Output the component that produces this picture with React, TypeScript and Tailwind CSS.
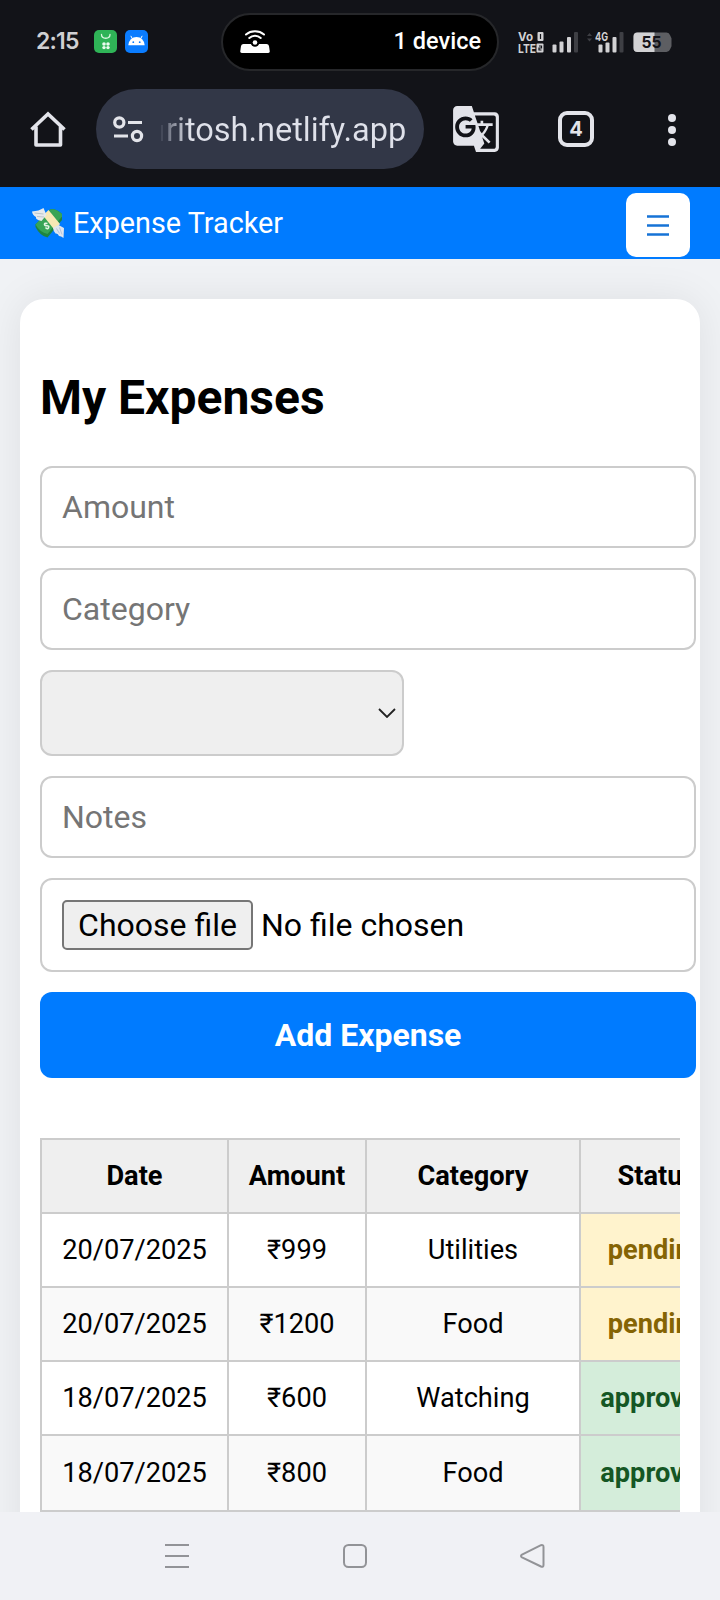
import type { ReactNode } from "react";
import { MdGTranslate } from "react-icons/md";

type Status = "pending" | "approved";

interface Expense {
  date: string;
  amount: string;
  category: string;
  status: Status;
}

const expenses: Expense[] = [
  { date: "20/07/2025", amount: "₹999", category: "Utilities", status: "pending" },
  { date: "20/07/2025", amount: "₹1200", category: "Food", status: "pending" },
  { date: "18/07/2025", amount: "₹600", category: "Watching", status: "approved" },
  { date: "18/07/2025", amount: "₹800", category: "Food", status: "approved" },
];

const statusStyles: Record<Status, string> = {
  pending: "bg-[#fff3cd] text-[#856404]",
  approved: "bg-[#d4edda] text-[#155724]",
};

function StatusBar() {
  return (
    <div className="flex h-[83px] items-center pl-9">
      <span className="w-[58px] whitespace-nowrap font-['Inter'] text-[23px] font-semibold leading-none tracking-[-0.8px] text-[#d0d0d2]">
        2:15
      </span>
      <svg className="h-[23px] w-[54px]" viewBox="0 0 54 23">
        <rect width="23" height="23" rx="5" fill="#2fb457" />
        <path d="M7.5 4.5c0 5 8.500 5 8.500 0" fill="none" stroke="#d9f7e0" strokeWidth="1.300" strokeLinecap="round" />
        <g fill="#e9fbee">
          <circle cx="10" cy="14" r="1.800" />
          <circle cx="14" cy="14" r="1.800" />
          <circle cx="10" cy="17.600" r="1.700" />
          <circle cx="14" cy="17.600" r="1.700" />
        </g>
        <rect x="31" width="23" height="23" rx="5" fill="#0a7cff" />
        <path d="M34.300 15.300a8.200 8.200 0 0 1 16.400 0z" fill="#fff" />
        <path d="m38.500 9-1.500-2.800M46.500 9 48 6.200" stroke="#fff" strokeWidth="1" strokeLinecap="round" />
        <circle cx="39.300" cy="12.200" r=".9" fill="#0a7cff" />
        <circle cx="45.700" cy="12.200" r=".9" fill="#0a7cff" />
      </svg>
      <div className="ml-[73px] flex h-[58px] w-[278px] shrink-0 items-center justify-between rounded-full border-2 border-[#26272a] bg-black pl-[17px] pr-[16px]">
        <svg className="h-[24px] w-[30px]" viewBox="0 0 30 24">
          <path d="M3.500 14h23q2 0 2.500 2l.700 4.800q.200 2.200-1.900 2.200H2.200Q.100 23 .300 20.800L1 16q.500-2 2.500-2z" fill="#fff" />
          <circle cx="15" cy="12.500" r="4.300" fill="#000" />
          <circle cx="15" cy="12.500" r="2.300" fill="#fff" />
          <path d="M9.300 8c3.200-3.100 8.200-3.100 11.400 0M6 4.500c5-4.300 13-4.300 18 0" fill="none" stroke="#fff" strokeWidth="2" strokeLinecap="round" />
        </svg>
        <span className="whitespace-nowrap text-[23.500px] font-medium leading-none text-white">1 device</span>
      </div>
      <svg className="ml-[18px] h-[24px] w-[158px] font-['Inter'] font-bold" viewBox="0 0 158 24">
        <g fill="#d2d2d4">
          <text x="1" y="11" fontSize="11.500" textLength="15" lengthAdjust="spacingAndGlyphs">Vo</text>
          <text x="1" y="22.500" fontSize="12" textLength="18" lengthAdjust="spacingAndGlyphs">LTE</text>
          <rect x="20.500" y="2" width="6" height="9" rx="1" />
          <rect x="19.500" y="13.500" width="7" height="9" rx="1" />
          <rect x="35.500" y="14.500" width="4" height="8" rx="1" />
          <rect x="42.500" y="11.500" width="4" height="11" rx="1" />
          <rect x="50" y="7" width="4" height="15.500" rx="1" />
          <rect x="57" y="2" width="4" height="20.500" rx="1" fill="#3e3f44" />
          <path d="m70 6 2.500-3 2.500 3zM70 8.500l2.500 3 2.500-3z" fill="#3e3f44" />
          <text x="78" y="11" fontSize="11.500" textLength="13" lengthAdjust="spacingAndGlyphs">4G</text>
          <rect x="81.500" y="14.500" width="4" height="8" rx="1" />
          <rect x="88.500" y="12.500" width="4" height="10" rx="1" />
          <rect x="95.500" y="7" width="4" height="15.500" rx="1" />
          <rect x="102.500" y="2" width="4" height="20.500" rx="1" fill="#3e3f44" />
        </g>
        <path d="M23.500 4v5M22 16h2.500v2H22v2h2.500" fill="none" stroke="#121318" strokeWidth="1.200" />
        <path d="M120.500 2.500h29a4 4 0 0 1 3.600 2.800l1.400 3v8l-1.400 3a4 4 0 0 1-3.600 2.800h-29a4 4 0 0 1-4-4v-11.600a4 4 0 0 1 4-4z" fill="#5d5e62" />
        <path d="M137.500 2.500h-17a4 4 0 0 0-4 4v11.600a4 4 0 0 0 4 4h17z" fill="#d2d2d4" />
        <text x="124.500" y="18" fontSize="16" textLength="20" lengthAdjust="spacingAndGlyphs" fill="#121318">55</text>
      </svg>
    </div>
  );
}

function BrowserBar() {
  return (
    <div className="flex h-[104px] items-start pl-[30px] pt-[6px]">
      <svg className="mt-[22px] h-[37px] w-[37px]" viewBox="0 0 37 37" fill="none" stroke="#e3e4ea" strokeWidth="3.600" strokeLinejoin="round">
        <path d="M1.500 18.500 18 3l16.500 15.500" strokeLinejoin="miter" />
        <path d="M6 15.500V34h24.500V15.500" />
      </svg>
      <div className="ml-[29px] flex h-20 w-[328px] items-center rounded-full bg-[#323747] pl-4">
        <svg className="h-8 w-8" viewBox="0 0 32 32" fill="none" stroke="#e3e4ea" strokeWidth="3.200">
          <circle cx="7.300" cy="9.500" r="4.600" />
          <circle cx="25" cy="23" r="4.600" />
          <path d="M16 9.500h14M2 23h14" />
        </svg>
        <i className="ml-[17px] mt-2 h-4 w-0.5 bg-[#444959]" />
        <div className="mt-[6px] whitespace-nowrap bg-linear-to-r from-[#5a5f6e] from-[0%] via-[#dfe1ea] via-[11%] to-[#dfe1ea] bg-clip-text pb-1 pl-[3px] text-[32.600px] leading-[42px] tracking-[-0.040px] text-transparent">
          ritosh.netlify.app
        </div>
      </div>
      <MdGTranslate className="ml-[27px] mt-[15px] h-[50px] w-[50px] text-[#e3e4ea]" />
      <div className="ml-[57px] mt-[22px] flex h-9 w-9 items-center justify-center rounded-[9px] border-4 border-[#e3e4ea] font-['Inter'] text-[20px] font-bold leading-none text-[#e3e4ea]">
        4
      </div>
      <div className="ml-[74px] mt-[25px] flex flex-col gap-1">
        <i className="size-2 rounded-full bg-[#e3e4ea]" />
        <i className="size-2 rounded-full bg-[#e3e4ea]" />
        <i className="size-2 rounded-full bg-[#e3e4ea]" />
      </div>
    </div>
  );
}

function MoneyWings() {
  return (
    <svg className="h-[32px] w-[33px]" viewBox="0 0 33 32">
      <path d="M3.500 17.500 18 2.500q6-1.500 12 4.500v6L15.500 30.500Q8 29 3.500 20z" fill="#1e8440" />
      <path d="M3.500 17.500 18 2.500q6-1.500 12 4.500v2.500L15.500 27Q8 25.500 3.500 17.500z" fill="#37a455" />
      <path d="m11 8.500 5.500-5.500L28 17l-5 6.500z" fill="#f7e8b4" />
      <path d="M0 4.500q7-.500 11.500-3.500l3 7-5 6Q3 12.500 4 10 .500 8 0 4.500z" fill="#e5e9ec" />
      <path d="m2.500 6 9 1M5 9.500l7 .500" stroke="#b9c5cc" strokeWidth="1" />
      <path d="m21 21 5.500-3 5.500 3-.500 10q-2.500-2-4.500-2-1-3-3.500-2.500-2-2-2.500-5.500z" fill="#dfe5ee" />
      <path d="m27.500 20.500 2.500 7m-5.500-6 3 5" stroke="#b3c3dc" strokeWidth="1" />
      <path d="M15.500 16.500q-3-.700-3 .8t2.500 1.500 1.500 2-3-.300" fill="none" stroke="#e4f5e4" strokeWidth="1.600" />
    </svg>
  );
}

function Field({ label }: { label: string }) {
  return (
    <input
      placeholder={label}
      className="h-[82px] w-full rounded-xl border-2 border-[#ccc] bg-white px-5 text-[32px] text-black placeholder:text-[#757575]"
    />
  );
}

function Cell({ children, className }: { children: ReactNode; className?: string }) {
  return (
    <div className={`flex items-center justify-center border-r-2 border-b-2 border-[#ccc] ${className ?? ""}`}>
      {children}
    </div>
  );
}

const rowGrid = "grid w-[700px] grid-cols-[187px_138px_214px_154px] border-l-2 border-[#ccc]";

function ExpenseTable() {
  return (
    <div className="mt-[60px] w-[640px] overflow-hidden text-[27.200px] text-black">
      <div className={`${rowGrid} h-[76px] border-t-2 bg-[#efefef] font-bold`}>
        <Cell>Date</Cell>
        <Cell>Amount</Cell>
        <Cell>Category</Cell>
        <Cell>Status</Cell>
      </div>
      {expenses.map((expense, i) => (
        <div key={i} className={`${rowGrid} h-[74px] last:h-[76px] ${i % 2 ? "bg-[#f9f9f9]" : "bg-white"}`}>
          <Cell>{expense.date}</Cell>
          <Cell>{expense.amount}</Cell>
          <Cell>{expense.category}</Cell>
          <Cell className={`font-bold ${statusStyles[expense.status]}`}>{expense.status}</Cell>
        </div>
      ))}
    </div>
  );
}

export default function App() {
  return (
    <div className="flex h-[1600px] w-[720px] flex-col overflow-hidden bg-[#f0f2f5] font-['Roboto','Liberation_Sans',sans-serif]">
      <div className="h-[187px] shrink-0 bg-[#121318]">
        <StatusBar />
        <BrowserBar />
      </div>

      <header className="flex h-[72px] shrink-0 items-start justify-between bg-[#007bff] pl-8 pr-[30px]">
        <div className="mt-[18px] flex items-center gap-[8px]">
          <MoneyWings />
          <span className="mt-px text-[28.800px] leading-[34px] text-white">Expense Tracker</span>
        </div>
        <button className="mt-[6px] flex size-16 items-center justify-center rounded-[10px] bg-white">
          <svg className="h-[22px] w-[22px]" viewBox="0 0 22 22" stroke="#1673d6" strokeWidth="2.500">
            <path d="M0 2.500h22M0 11.500h22M0 20.500h22" />
          </svg>
        </button>
      </header>

      <div className="h-[1253px] shrink-0 overflow-hidden px-5 pt-10">
        <main className="h-[1300px] rounded-[24px] bg-white px-5 pt-[71px] shadow-[0_0_40px_rgba(0,0,0,0.08)]">
          <h1 className="text-[48px] font-bold leading-[56px] text-black">My Expenses</h1>
          <form className="mt-[40px] flex w-[656px] flex-col gap-5">
            <Field label="Amount" />
            <Field label="Category" />
            <div className="flex h-[86px] w-[364px] items-center justify-end rounded-xl border-2 border-[#ccc] bg-[#efefef] pr-[6px]">
              <svg className="h-[10px] w-[18px]" viewBox="0 0 18 10" fill="none" stroke="#222" strokeWidth="1.800">
                <path d="m1 1 8 8 8-8" />
              </svg>
            </div>
            <Field label="Notes" />
            <div className="flex h-[94px] items-center rounded-xl border-2 border-[#ccc] pl-5 text-[32px] text-black">
              <span className="flex h-[50px] w-[191px] items-center justify-center whitespace-nowrap rounded-[5px] border-2 border-[#767676] bg-[#efefef]">
                Choose file
              </span>
              <span className="ml-2">No file chosen</span>
            </div>
            <button type="button" className="h-[86px] rounded-xl bg-[#007bff] text-[32px] font-bold text-white">
              Add Expense
            </button>
          </form>
          <ExpenseTable />
        </main>
      </div>

      <nav className="flex h-[88px] shrink-0 items-center bg-[#f0f1f5] pl-[164px]">
        <svg className="h-[26px] w-[26px]" viewBox="0 0 26 26" stroke="#929397" strokeWidth="2">
          <path d="M1 2h24M1 13h24M1 24h24" />
        </svg>
        <svg className="ml-[152px] h-[26px] w-[26px]" viewBox="0 0 26 26" fill="none" stroke="#929397" strokeWidth="2">
          <rect x="2" y="2" width="22" height="22" rx="4.500" />
        </svg>
        <svg className="ml-[152px] h-[26px] w-[26px]" viewBox="0 0 26 26" fill="none" stroke="#929397" strokeWidth="2" strokeLinejoin="round">
          <path d="M2 11.600 21 2.200q2.500-.700 2.500 1.800v18q0 2.500-2.500 1.500L2 14.300q-2-1.300 0-2.700z" />
        </svg>
      </nav>
    </div>
  );
}
